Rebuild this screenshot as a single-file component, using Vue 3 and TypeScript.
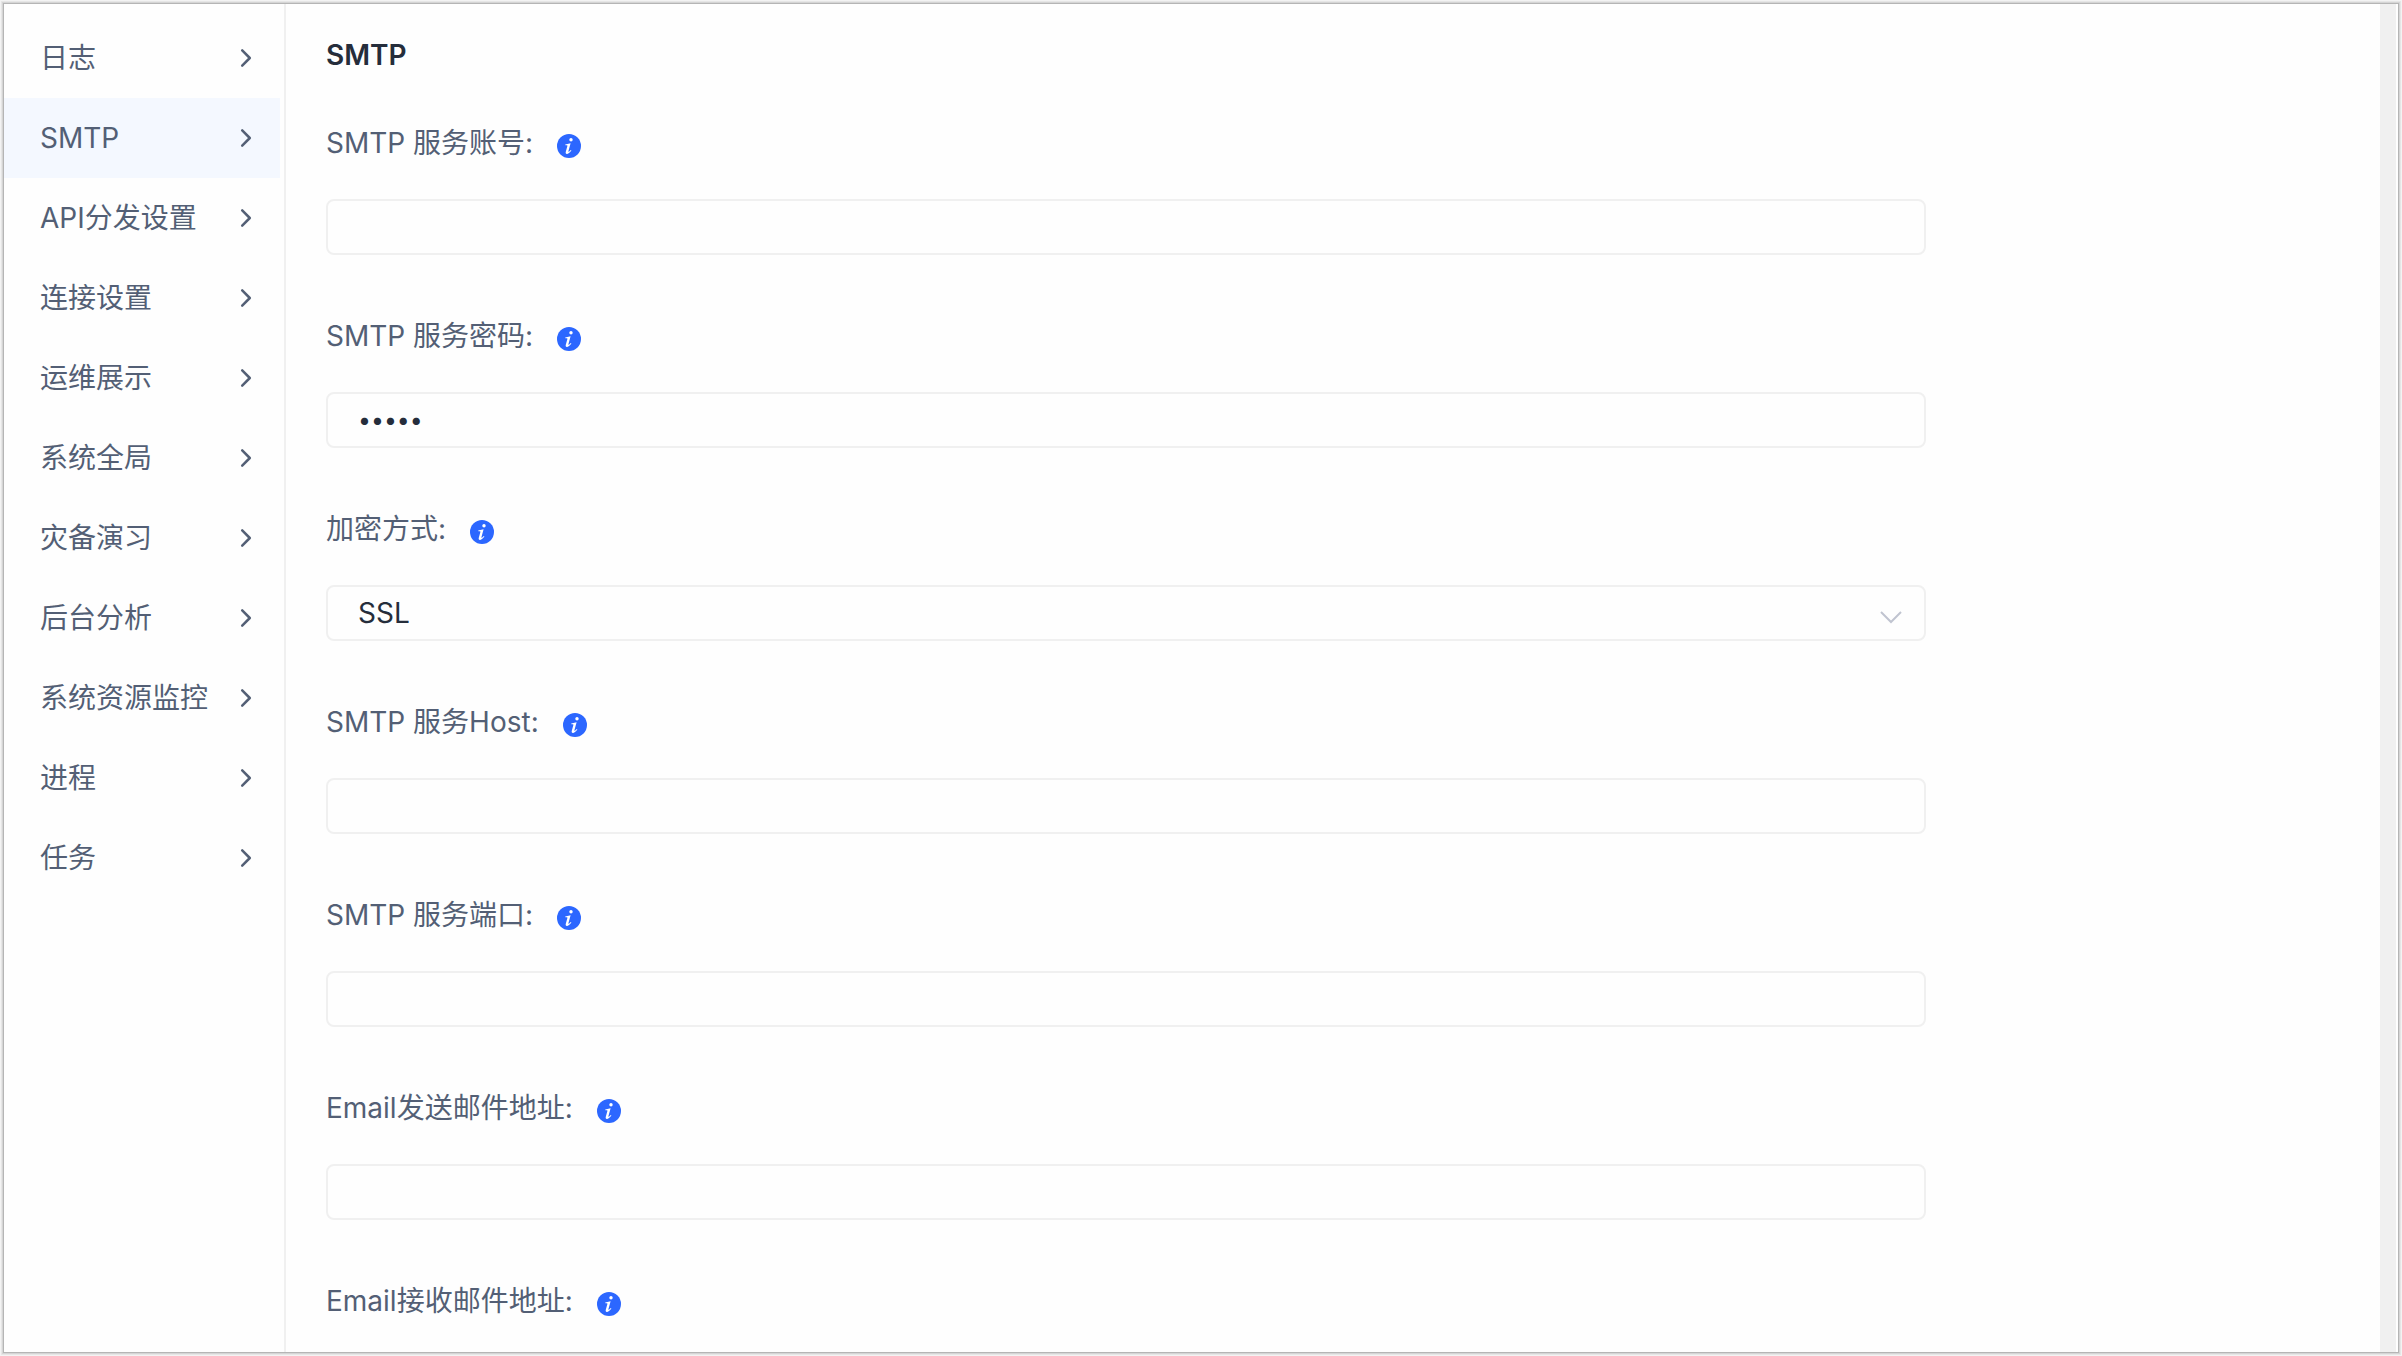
<script setup lang="ts">
import { ref } from 'vue'

interface Field {
  id: string
  label: string
  kind: 'text' | 'password' | 'select'
  value: string
}

const menu: string[] = [
  '日志', 'SMTP', 'API分发设置', '连接设置', '运维展示', '系统全局',
  '灾备演习', '后台分析', '系统资源监控', '进程', '任务',
]
const active = ref('SMTP')

const fields = ref<Field[]>([
  { id: 'account', label: 'SMTP 服务账号:', kind: 'text', value: '' },
  { id: 'password', label: 'SMTP 服务密码:', kind: 'password', value: 'abcde' },
  { id: 'encryption', label: '加密方式:', kind: 'select', value: 'SSL' },
  { id: 'host', label: 'SMTP 服务Host:', kind: 'text', value: '' },
  { id: 'port', label: 'SMTP 服务端口:', kind: 'text', value: '' },
  { id: 'sender', label: 'Email发送邮件地址:', kind: 'text', value: '' },
  { id: 'receiver', label: 'Email接收邮件地址:', kind: 'text', value: '' },
])
</script>

<template>
  <div class="page">
    <div class="panel">
      <nav class="sidebar">
        <button
          v-for="item in menu"
          :key="item"
          type="button"
          class="item"
          :class="{ active: item === active }"
          @click="active = item"
        >
          <span>{{ item }}</span>
          <svg class="chevron" viewBox="0 0 12 20" aria-hidden="true">
            <path d="M2.2 2.4l7.6 7.6-7.6 7.6" stroke-width="2.5" />
          </svg>
        </button>
      </nav>
      <main class="content">
        <h1 class="title">SMTP</h1>
        <div v-for="f in fields" :key="f.id" class="field">
          <div class="label-row">
            <label :for="f.id">{{ f.label }}</label>
            <svg class="info" viewBox="0 0 24 24" aria-hidden="true">
              <circle class="disc" cx="12" cy="12" r="12" />
              <circle class="dot" cx="14" cy="5.8" r="1.7" />
              <path
                class="stem"
                d="M8.2 10.6l5.4-1.4-2.2 8.1c-.2.8.3.7 2.5-1.4l.5.5c-1.700 2.300-3.200 3.500-4.500 3.500-1.100 0-1.500-.8-1.100-2.200l1.600-5.600c.2-.8-.2-1-2-.8z"
              />
            </svg>
          </div>
          <div v-if="f.kind === 'select'" class="select">
            <select :id="f.id" v-model="f.value" class="control">
              <option>SSL</option>
              <option>TLS</option>
            </select>
            <svg class="arrow" viewBox="0 0 22 14" aria-hidden="true">
              <path d="M1 2l10 10 10-10" />
            </svg>
          </div>
          <input
            v-else
            :id="f.id"
            v-model="f.value"
            class="control"
            :type="f.kind"
            autocomplete="off"
          />
        </div>
      </main>
      <div class="track"></div>
    </div>
  </div>
</template>

<style>
body {
  background: #f3f3f3;
}
</style>

<style scoped>
.page {
  box-sizing: border-box;
  height: 100vh;
  padding: 4px;
  font-family: Inter, "Noto Sans CJK SC", sans-serif;
  font-size: 28px;
  line-height: 40px;
  color: #535f75;
}

.panel {
  display: flex;
  box-sizing: border-box;
  height: 100%;
  padding-right: 2px;
  background: #fefefe;
  box-shadow: 0 0 0 1px #b5b5b5, 0 0 0 2px #d5d5d5, 0 0 0 3px #e6e6e6;
}

.sidebar {
  flex: none;
  box-sizing: border-box;
  width: 282px;
  padding: 14px 4px 0 0;
  border-right: 2px solid #f0f0f0;
}

.item {
  display: flex;
  align-items: center;
  justify-content: space-between;
  box-sizing: border-box;
  width: 100%;
  height: 80px;
  padding: 0 28px 0 36px;
  border: 0;
  background: none;
  color: inherit;
  font: inherit;
  text-align: left;
  white-space: nowrap;
  cursor: pointer;
}

.item.active {
  background: #f4f8ff;
}

.chevron {
  flex: none;
  width: 12px;
  height: 20px;
  fill: none;
  stroke: #535f75;
  stroke-linecap: round;
  stroke-linejoin: round;
}

.content {
  flex: 1;
  min-width: 0;
  padding: 31px 40px 0;
  overflow: hidden;
}

.title {
  margin: 0 0 48px;
  color: #252d3b;
  font-size: 28px;
  font-weight: 600;
  line-height: 40px;
}

.field {
  max-width: 1600px;
  margin-bottom: 61px;
}

.label-row {
  display: flex;
  align-items: center;
  gap: 24px;
  margin-bottom: 36px;
}

.info {
  width: 24px;
  height: 24px;
  margin-top: 6px;
}

.disc {
  fill: #2c67ff;
}

.dot,
.stem {
  fill: #fff;
}

.control {
  display: block;
  box-sizing: border-box;
  width: 100%;
  height: 56px;
  padding: 0 30px;
  border: 2px solid #f0f0f0;
  border-radius: 8px;
  outline: none;
  background: #fefefe;
  color: #252d3b;
  font: inherit;
  appearance: none;
}

.control[type="password"] {
  font-size: 23px;
}

.select {
  position: relative;
}

.arrow {
  position: absolute;
  top: 25px;
  right: 24px;
  width: 22px;
  height: 14px;
  fill: none;
  stroke: #c0c4d0;
  stroke-width: 2;
  pointer-events: none;
}

.track {
  flex: none;
  width: 16px;
  background: #f0f0f0;
}
</style>
